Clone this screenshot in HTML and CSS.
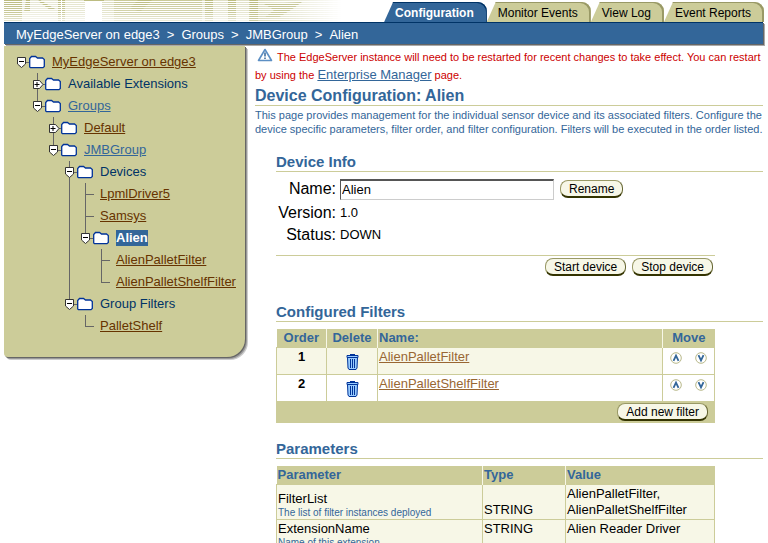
FILE: index.html
```html
<!DOCTYPE html>
<html lang="en">
<head>
<meta charset="utf-8">
<title>Device Configuration: Alien</title>
<link rel="stylesheet" href="styles.css">
</head>
<body>
<svg class="symbols" aria-hidden="true">
  <symbol id="folder" viewBox="0 0 16 14">
    <path d="M.7 12V3.500L2.500 1.500h4L8.500 3H13.500L15.300 4.500V11.500L14 12.700H1.500z" fill="#fff" stroke="#039" stroke-width="1.300"/>
  </symbol>
  <symbol id="open" viewBox="0 0 11 13">
    <path d="M1.500 1.500h8v6.500l-4 3.500-4-3.500z" fill="#fff" stroke="#333"/>
    <path d="M3 5.500h5" stroke="#000"/>
  </symbol>
  <symbol id="closed" viewBox="0 0 12 11">
    <path d="M1.500 1.500h6l3.500 4-3.500 4h-6z" fill="#fff" stroke="#333"/>
    <path d="M2.500 5.500h5M5 3v5" stroke="#000"/>
  </symbol>
  <symbol id="trash" viewBox="0 0 13 17">
    <path d="M4 1.500h5M1 2.500h11v2H1z" fill="#9cf" stroke="#039"/>
    <path d="M1.500 4.500h10l-.5 10.500-1 1.500h-7l-1-1.500z" fill="#9cf" stroke="#039"/>
    <path d="M4.500 6v9M6.500 6v9M8.500 6v9" stroke="#039"/>
  </symbol>
  <symbol id="up" viewBox="0 0 12 12">
    <circle cx="6" cy="6" r="5.300" fill="#fff" stroke="#b8b88a"/>
    <path d="M3.500 8.800L6 3.500l2.500 5.300" fill="none" stroke="#369" stroke-width="1.800"/>
  </symbol>
  <symbol id="down" viewBox="0 0 12 12">
    <circle cx="6" cy="6" r="5.300" fill="#fff" stroke="#b8b88a"/>
    <path d="M3.500 3.200L6 8.500l2.500-5.300" fill="none" stroke="#369" stroke-width="1.800"/>
  </symbol>
</svg>

<header class="top">
  <svg class="banner" width="342" height="21" viewBox="2 0 342 21" aria-hidden="true">
    <defs>
      <pattern id="lines" width="8" height="2" patternUnits="userSpaceOnUse"><path d="M0 .5h8" stroke="#bbbb80"/></pattern>
      <linearGradient id="fade" x1="0" x2="0" y1="0" y2="1"><stop offset="0" stop-color="#fff"/><stop offset=".6" stop-color="#fff" stop-opacity=".8"/><stop offset="1" stop-color="#fff" stop-opacity=".35"/></linearGradient>
      <linearGradient id="out"><stop offset="0" stop-color="#fff"/><stop offset="1" stop-color="#fff" stop-opacity="0"/></linearGradient>
      <mask id="drop"><rect width="342" height="21" fill="url(#fade)"/></mask>
      <mask id="side"><rect x="247" width="93" height="21" fill="url(#out)"/></mask>
    </defs>
    <g fill="url(#lines)" mask="url(#drop)">
      <rect x="2" width="18" height="21"/>
      <rect x="20" width="36" height="21" opacity=".35"/>
      <path d="M24 0h4v12h-6zM38 0l17 10h-7L36 1zM56 0h3v21h-3zM60 0h3v21h-3z"/>
      <rect x="63" width="20" height="21" opacity=".4"/>
      <rect x="100" width="12" height="21" opacity=".5"/>
      <rect x="112" width="88" height="21" opacity=".8"/>
      <rect x="200" width="48" height="21" opacity=".45"/>
      <path d="M136 0l-8 8 10 4 12-12zM203 0h8v21h-8zM226 0h8v21h-8zM248 0h8v21h-8z"/>
      <path d="M262 4l38-2-8 6-16 10h-14l10-8z" opacity=".8"/>
      <rect x="82" width="20" height="2"/>
    </g>
    <rect x="247" width="93" height="21" fill="url(#lines)" mask="url(#side)" opacity=".6"/>
  </svg>
  <nav class="tabs" aria-label="Sections">
    <a class="tab tab-active" href="#" aria-current="page">Configuration</a>
    <a class="tab" href="#">Monitor Events</a>
    <a class="tab" href="#">View Log</a>
    <a class="tab" href="#">Event Reports</a>
  </nav>
</header>
<nav class="crumbs" aria-label="Breadcrumb">
  <a href="#">MyEdgeServer on edge3</a><span>&gt;</span><a href="#">Groups</a><span>&gt;</span><a href="#">JMBGroup</a><span>&gt;</span><a href="#">Alien</a>
</nav>

<div class="columns">
  <aside class="sidebar">
    <ul class="tree">
      <li><div class="node"><button class="toggle" aria-label="Collapse"><svg width="11" height="13"><use href="#open"/></svg></button><svg class="folder" width="16" height="14"><use href="#folder"/></svg><a href="#">MyEdgeServer on edge3</a></div>
        <ul>
          <li><div class="node"><button class="toggle" aria-label="Expand"><svg width="12" height="11"><use href="#closed"/></svg></button><svg class="folder" width="16" height="14"><use href="#folder"/></svg><span>Available Extensions</span></div></li>
          <li><div class="node"><button class="toggle" aria-label="Collapse"><svg width="11" height="13"><use href="#open"/></svg></button><svg class="folder" width="16" height="14"><use href="#folder"/></svg><a class="blue" href="#">Groups</a></div>
            <ul>
              <li><div class="node"><button class="toggle" aria-label="Expand"><svg width="12" height="11"><use href="#closed"/></svg></button><svg class="folder" width="16" height="14"><use href="#folder"/></svg><a href="#">Default</a></div></li>
              <li><div class="node"><button class="toggle" aria-label="Collapse"><svg width="11" height="13"><use href="#open"/></svg></button><svg class="folder" width="16" height="14"><use href="#folder"/></svg><a class="blue" href="#">JMBGroup</a></div>
                <ul>
                  <li><div class="node"><button class="toggle" aria-label="Collapse"><svg width="11" height="13"><use href="#open"/></svg></button><svg class="folder" width="16" height="14"><use href="#folder"/></svg><span>Devices</span></div>
                    <ul>
                      <li><div class="node leaf"><a href="#">LpmlDriver5</a></div></li>
                      <li><div class="node leaf"><a href="#">Samsys</a></div></li>
                      <li><div class="node"><button class="toggle" aria-label="Collapse"><svg width="11" height="13"><use href="#open"/></svg></button><svg class="folder" width="16" height="14"><use href="#folder"/></svg><strong>Alien</strong></div>
                        <ul>
                          <li><div class="node leaf"><a href="#">AlienPalletFilter</a></div></li>
                          <li><div class="node leaf"><a href="#">AlienPalletShelfFilter</a></div></li>
                        </ul>
                      </li>
                    </ul>
                  </li>
                  <li><div class="node"><button class="toggle" aria-label="Collapse"><svg width="11" height="13"><use href="#open"/></svg></button><svg class="folder" width="16" height="14"><use href="#folder"/></svg><span>Group Filters</span></div>
                    <ul>
                      <li><div class="node leaf"><a href="#">PalletShelf</a></div></li>
                    </ul>
                  </li>
                </ul>
              </li>
            </ul>
          </li>
        </ul>
      </li>
    </ul>
  </aside>

  <main class="main">
    <p class="notice"><svg class="warn" width="16" height="14" viewBox="0 0 16 14" aria-hidden="true"><path d="M8 1.500L14.500 12.500H1.500z" fill="#fff" stroke="#5c8fc4" stroke-width="1.600" stroke-linejoin="round"/><path d="M8 4.500v4M8 9.500v1.500" stroke="#369" stroke-width="1.500"/></svg>The EdgeServer instance will need to be restarted for recent changes to take effect. You can restart by using the <a href="#">Enterprise Manager</a> page.</p>
    <h1>Device Configuration: Alien</h1>
    <p class="intro">This page provides management for the individual sensor device and its associated filters. Configure the device specific parameters, filter order, and filter configuration. Filters will be executed in the order listed.</p>

    <section class="section">
      <h2>Device Info</h2>
      <form class="info">
        <label for="name">Name:</label>
        <div class="name"><input id="name" type="text" value="Alien"><button class="pill" type="button">Rename</button></div>
        <span class="label">Version:</span><span>1.0</span>
        <span class="label">Status:</span><span>DOWN</span>
      </form>
      <div class="actions"><button class="pill" type="button">Start device</button><button class="pill" type="button">Stop device</button></div>
    </section>

    <section class="section">
      <h2>Configured Filters</h2>
      <table class="grid filters">
        <colgroup><col class="c-order"><col class="c-delete"><col><col class="c-move"></colgroup>
        <thead><tr><th class="center">Order</th><th class="center">Delete</th><th>Name:</th><th class="center">Move</th></tr></thead>
        <tbody>
          <tr><td class="order">1</td><td class="center"><button class="icon" aria-label="Delete"><svg width="13" height="17"><use href="#trash"/></svg></button></td><td><a href="#">AlienPalletFilter</a></td><td><div class="moves"><button class="icon" aria-label="Move up"><svg width="12" height="12"><use href="#up"/></svg></button><button class="icon" aria-label="Move down"><svg width="12" height="12"><use href="#down"/></svg></button></div></td></tr>
          <tr><td class="order">2</td><td class="center"><button class="icon" aria-label="Delete"><svg width="13" height="17"><use href="#trash"/></svg></button></td><td><a href="#">AlienPalletShelfFilter</a></td><td><div class="moves"><button class="icon" aria-label="Move up"><svg width="12" height="12"><use href="#up"/></svg></button><button class="icon" aria-label="Move down"><svg width="12" height="12"><use href="#down"/></svg></button></div></td></tr>
        </tbody>
      </table>
      <div class="table-foot"><button class="pill" type="button">Add new filter</button></div>
    </section>

    <section class="section">
      <h2>Parameters</h2>
      <table class="grid params">
        <colgroup><col class="c-param"><col class="c-type"><col></colgroup>
        <thead><tr><th>Parameter</th><th>Type</th><th>Value</th></tr></thead>
        <tbody>
          <tr class="bottom"><td>FilterList<small>The list of filter instances deployed</small></td><td>STRING</td><td>AlienPalletFilter,<br>AlienPalletShelfFilter</td></tr>
          <tr><td>ExtensionName<small>Name of this extension</small></td><td>STRING</td><td>Alien Reader Driver</td></tr>
        </tbody>
      </table>
    </section>
  </main>
</div>
</body>
</html>
```

FILE: styles.css
```css
* { box-sizing: border-box; }
html { scrollbar-width: none; }
body {
  margin: 0;
  padding: 0 4px;
  background: #fff;
  color: #000;
  font: 13px/16px "Liberation Sans", Arial, sans-serif;
}
ul, p, h1, h2 { margin: 0; padding: 0; }
ul { list-style: none; }
button { font: inherit; color: inherit; cursor: pointer; }
svg { display: block; }
.symbols { position: absolute; width: 0; height: 0; }

.top { display: flex; justify-content: space-between; align-items: flex-end; height: 22px; }
.banner { flex: none; align-self: flex-start; }
.tabs { display: flex; }
.tab {
  height: 20px;
  padding: 0 13px 0 11px;
  border-radius: 0 9px 0 0;
  background: #cccc99;
  box-shadow: inset -2px 1px 0 #999966;
  clip-path: polygon(9px 0, 100% 0, 100% 100%, 0 100%);
  color: #000;
  font-size: 12px;
  line-height: 22px;
  text-decoration: none;
}
.tab-active { background: #336699; box-shadow: inset -1px 1px 0 #003366; color: #fff; font-weight: bold; }

.crumbs {
  display: flex;
  gap: 7px;
  height: 22px;
  margin-right: 1px;
  padding: 0 12px;
  border-top: 1px solid #003366;
  background: #336699;
  box-shadow: 1px 1px 0 #666, 2px 2px 0 #aaa;
  color: #fff;
  line-height: 24px;
}
.crumbs a { color: #fff; text-decoration: none; }

.columns { display: flex; align-items: flex-start; gap: 10px; padding-top: 2px; }
.sidebar {
  flex: none;
  width: 241px;
  padding: 5px 0 20px 12px;
  border-radius: 0 0 18px 4px;
  background: #cccc99;
  box-shadow: 1px 1px 0 #666, 2px 2px 0 #999, 3px 3px 0 #ccc;
}
.tree ul { margin-left: 16px; }
.tree ul > li { background: linear-gradient(#666, #666) 5px 0 / 1px 100% no-repeat; }
.tree ul > li:last-child { background-size: 1px 11px; }
.node {
  display: flex;
  align-items: center;
  height: 22px;
  background: linear-gradient(#666, #666) 5px 11px / 9px 1px no-repeat;
  color: #003366;
  white-space: nowrap;
}
.leaf { padding-left: 20px; }
.node a { color: #663300; }
.node a.blue { color: #336699; }
.node strong { background: #336699; color: #fff; }
.toggle { flex: none; width: 13px; padding: 0; border: 0; background: none; }
.folder { flex: none; margin-right: 7px; }

.main { flex: 1; min-width: 0; margin-right: 1px; }
.notice { color: #c00; font-size: 11px; line-height: 18px; padding-top: 2px; }
.notice a { color: #336699; font-size: 13px; }
.warn { display: inline-block; margin: 0 4px 0 2px; vertical-align: -1px; }
h1, h2 { border-bottom: 1px solid #cccc99; color: #336699; font-weight: bold; }
h1 { margin-top: 2px; font-size: 16px; line-height: 19px; }
h2 { font-size: 15px; line-height: 18px; }
.intro { margin-top: 2px; color: #336699; font-size: 11px; line-height: 14px; }
.section { margin: 17px 0 0 21px; }

.info {
  display: grid;
  grid-template-columns: 60px 1fr;
  grid-template-rows: 26px 22px 22px;
  align-items: center;
  gap: 0 4px;
  margin-right: 48px;
  padding: 4px 0 9px;
  border-bottom: 1px solid #cccc99;
}
.info label, .label { font-size: 16px; text-align: right; }
.name { display: flex; align-items: center; gap: 6px; }
.name input {
  width: 214px;
  height: 21px;
  padding: 0 1px;
  border: 1px solid #ccc;
  border-top: 2px solid #555;
  border-left-color: #555;
  background: #fff;
  font: inherit;
}
.pill {
  height: 18px;
  padding: 0 8px;
  border: 1px solid #999966;
  border-bottom: 2px solid #333300;
  border-right-color: #666633;
  border-radius: 8px;
  background: #f7f7e7;
  font-size: 12px;
  line-height: 14px;
}
.actions { display: flex; justify-content: flex-end; gap: 6px; margin-right: 48px; padding: 2px 2px 10px; }

.grid {
  width: calc(100% - 48px);
  margin-top: 7px;
  border-collapse: collapse;
  table-layout: fixed;
}
.grid th {
  height: 18px;
  padding: 1px;
  border-right: 1px solid #f7f7e7;
  background: #cccc99;
  color: #336699;
  text-align: left;
  font-weight: bold;
}
.grid th:last-child { border-right: 0; }
.grid td { padding: 1px; border: 1px solid #cccc99; background: #f7f7e7; vertical-align: top; }
.grid .center, .grid .order { text-align: center; }
.grid td a { color: #996633; }
.order { font-weight: bold; }
.filters td { height: 27px; }
.filters tbody tr:nth-child(2) td, .filters td:last-child { background: #fff; }
.c-order { width: 50px; }
.c-delete { width: 51px; }
.c-move { width: 52px; }
.c-param { width: 206px; }
.c-type { width: 83px; }
.icon { padding: 0; border: 0; background: none; }
.filters .center .icon { display: block; margin: 4px auto 0; }
.moves { display: flex; justify-content: center; gap: 13px; padding-top: 3px; }
.table-foot {
  display: flex;
  justify-content: flex-end;
  margin-right: 48px;
  padding: 1px 7px 2px;
  background: #cccc99;
}
.params td { line-height: 16px; }
.params .bottom td { vertical-align: bottom; }
.params small { display: block; color: #336699; font-size: 10px; line-height: 11px; }
```
